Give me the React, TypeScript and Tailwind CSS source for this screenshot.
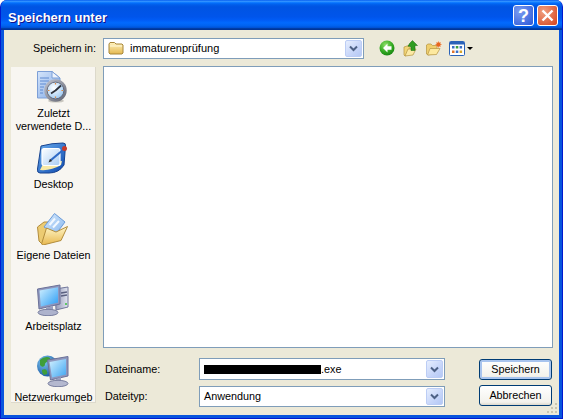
import type { ReactNode } from 'react'

const FONT = "font-['Liberation_Sans',Arial,sans-serif] text-[10.8px] leading-[13px] text-black"

function ComboArrow() {
  return (
    <div className="flex w-[17px] shrink-0 items-center justify-center rounded-[2px] border border-[#bccdf5] bg-[linear-gradient(135deg,#e6eefe,#c6d5f9_60%,#b4c8f5)]">
      <svg width="9" height="7" viewBox="0 0 9 7">
        <path d="M1 1.5 L4.5 5 L8 1.5" fill="none" stroke="#4d6185" strokeWidth="2" />
      </svg>
    </div>
  )
}

function Combo({ className, children }: { className: string; children: ReactNode }) {
  return (
    <div className={`flex items-stretch border border-[#7f9db9] bg-white p-px ${className}`}>
      <div className="flex min-w-0 flex-1 items-center pl-[3px]">{children}</div>
      <ComboArrow />
    </div>
  )
}

function FolderSmall() {
  return (
    <svg width="16" height="14" viewBox="0 0 16 14">
      <defs>
        <linearGradient id="fs" x1="0" y1="0" x2="0" y2="1">
          <stop offset="0" stopColor="#fff3c0" />
          <stop offset="1" stopColor="#e4b850" />
        </linearGradient>
      </defs>
      <path d="M1 3 L2 1.5 H6.5 L8 3 H14 L15 4 V12 L14 13 H2 L1 12 Z" fill="url(#fs)" stroke="#a8873a" strokeWidth="1" />
      <path d="M2 5 H14" stroke="#fff8d8" strokeWidth="1" />
    </svg>
  )
}

function BackIcon() {
  return (
    <svg width="16" height="16" viewBox="0 0 16 16">
      <defs>
        <radialGradient id="bk" cx="0.4" cy="0.3" r="0.8">
          <stop offset="0" stopColor="#8fe06a" />
          <stop offset="0.6" stopColor="#2fa51e" />
          <stop offset="1" stopColor="#137a10" />
        </radialGradient>
      </defs>
      <circle cx="8" cy="8" r="7.5" fill="url(#bk)" />
      <path d="M8.5 3.5 L4 8 L8.5 12.5 V9.7 H12.5 V6.3 H8.5 Z" fill="#fff" />
    </svg>
  )
}

function UpIcon() {
  return (
    <svg width="15" height="17" viewBox="0 0 15 17">
      <path d="M1 7 L7 5 V13 L2 16 L1 15 Z" fill="#f1d476" stroke="#b4933f" strokeWidth="0.7" />
      <path d="M2 16 L5 9 H13 L10 15 Z" fill="#fbe9a5" stroke="#b4933f" strokeWidth="0.7" />
      <path d="M9.5 0.5 L14.5 5.5 H12 V10.5 H8 V7 C7 6 6 6 5 6.5 L6.5 3.5 Z" fill="#2f9c22" stroke="#17690f" strokeWidth="0.5" />
    </svg>
  )
}

function NewFolderIcon() {
  return (
    <svg width="16" height="15" viewBox="0 0 16 15">
      <path d="M0.5 4 L2 3 H5 L6.5 4.5 H11 V12 L2.5 14 L0.5 13 Z" fill="#f0cf6e" stroke="#b4933f" strokeWidth="0.7" />
      <path d="M1.5 14 L4 7.5 H14 L10.5 13.5 Z" fill="#fde99f" stroke="#b4933f" strokeWidth="0.7" />
      <path d="M12.5 0 V7 M9 3.5 H16 M10 1 L15 6 M15 1 L10 6" stroke="#f4a46c" strokeWidth="0.7" />
      <circle cx="12.5" cy="3.5" r="2.2" fill="#e8641e" />
    </svg>
  )
}

function ViewsIcon() {
  return (
    <svg width="16" height="15" viewBox="0 0 16 15">
      <rect x="0.5" y="0.5" width="15" height="14" rx="1" fill="#fff" stroke="#2b63b8" />
      <rect x="1" y="1" width="14" height="2.5" fill="#2b63b8" />
      <rect x="3" y="5" width="2.5" height="2.5" fill="#3a6fc4" />
      <rect x="6.8" y="5" width="2.5" height="2.5" fill="#3aa040" />
      <rect x="10.6" y="5" width="2.5" height="2.5" fill="#3a6fc4" />
      <rect x="3" y="9.5" width="2.5" height="2.5" fill="#e0742c" />
      <rect x="6.8" y="9.5" width="2.5" height="2.5" fill="#3a6fc4" />
      <rect x="10.6" y="9.5" width="2.5" height="2.5" fill="#d9a52a" />
    </svg>
  )
}

function RecentIcon() {
  return (
    <svg width="32" height="32" viewBox="0 0 32 32">
      <defs>
        <linearGradient id="rd" x1="0" y1="0" x2="1" y2="1">
          <stop offset="0" stopColor="#d5e5fb" />
          <stop offset="1" stopColor="#7fa8e6" />
        </linearGradient>
        <linearGradient id="rr" x1="0" y1="0" x2="1" y2="1">
          <stop offset="0" stopColor="#c4c7d2" />
          <stop offset="1" stopColor="#5e616e" />
        </linearGradient>
        <radialGradient id="rc" cx="0.4" cy="0.35" r="0.7">
          <stop offset="0" stopColor="#ffffff" />
          <stop offset="1" stopColor="#9cc9f2" />
        </radialGradient>
      </defs>
      <path d="M0.5 0.5 H15 L23 7 V27 H0.5 Z" fill="url(#rd)" stroke="#7d9fd6" />
      <path d="M15 0.5 V7 H23 Z" fill="#eef4fd" stroke="#7d9fd6" />
      <path d="M3 7 H12 M3 10 H12 M3 13 H9 M3 16 H7 M3 19 H6 M3 22 H6" stroke="#5f8ad0" strokeWidth="1" />
      <ellipse cx="19" cy="30" rx="8" ry="1.6" fill="#c9c7bf" />
      <circle cx="18.5" cy="19.5" r="11.2" fill="url(#rr)" />
      <circle cx="18.5" cy="19.5" r="8.4" fill="url(#rc)" stroke="#55586a" strokeWidth="0.8" />
      <path d="M18.5 19.5 L24 14.5 M18.5 19.5 L14 22.5" stroke="#2d3039" strokeWidth="1.8" />
      <path d="M18.5 12 V13.5 M18.5 25.5 V27 M11 19.5 H12.5 M24.5 19.5 H26" stroke="#e2873a" strokeWidth="1.2" />
    </svg>
  )
}

function DesktopIcon() {
  return (
    <svg width="32" height="32" viewBox="0 0 32 32">
      <defs>
        <linearGradient id="dk" x1="0" y1="0" x2="1" y2="1">
          <stop offset="0" stopColor="#6db0f0" />
          <stop offset="1" stopColor="#0b46ad" />
        </linearGradient>
        <linearGradient id="dp" x1="0" y1="0" x2="1" y2="1">
          <stop offset="0" stopColor="#fdfeff" />
          <stop offset="1" stopColor="#a9cdf5" />
        </linearGradient>
      </defs>
      <path d="M4 4 Q15 1 26 1 Q29 1 28.5 4 L27 23 Q22 31 12 31 H3 Q0 31 0.5 27 Z" fill="url(#dk)" stroke="#17428e" />
      <path d="M3 28 Q14 29 24 23 L25 19 L6 22 Z" fill="#f8e9a5" />
      <rect x="5" y="6.5" width="18" height="17" rx="2" fill="url(#dp)" stroke="#ffffff" strokeWidth="1.2" />
      <path d="M14 18 L26 8" stroke="#2f6ac6" strokeWidth="2.2" />
      <path d="M11.5 20.5 L13 16.8 L15.2 19 Z" fill="#2b2b2b" />
      <circle cx="27.5" cy="6.5" r="2.5" fill="#c63a2b" />
    </svg>
  )
}

function MyDocsIcon() {
  return (
    <svg width="32" height="32" viewBox="0 0 32 32">
      <defs>
        <linearGradient id="md" x1="0" y1="0" x2="0" y2="1">
          <stop offset="0" stopColor="#fff6c8" />
          <stop offset="1" stopColor="#e8b84e" />
        </linearGradient>
        <linearGradient id="mb" x1="0" y1="0" x2="1" y2="1">
          <stop offset="0" stopColor="#d5e8fc" />
          <stop offset="1" stopColor="#8ab9ef" />
        </linearGradient>
      </defs>
      <path d="M0.5 14 L7 9 H12 V28 L5 31 L2 28 Z" fill="#eccb72" stroke="#b28c3c" />
      <path d="M7 14 L17.5 0.5 L28 9 L19 21 Z" fill="url(#mb)" stroke="#6a9ad8" />
      <path d="M12.5 12 L18 5.5 M16 14.5 L22 8" stroke="#f2f8ff" strokeWidth="2" />
      <path d="M4.5 31 L9.5 15 L19 19 L30.5 13.5 L24 27.5 L6 32 Z" fill="url(#md)" stroke="#b28c3c" />
    </svg>
  )
}

function MyComputerIcon() {
  return (
    <svg width="32" height="32" viewBox="0 0 32 32">
      <defs>
        <linearGradient id="mc" x1="0" y1="0" x2="1" y2="1">
          <stop offset="0" stopColor="#d2f0ff" />
          <stop offset="1" stopColor="#2a9cf4" />
        </linearGradient>
        <linearGradient id="mt" x1="0" y1="0" x2="1" y2="0">
          <stop offset="0" stopColor="#8f94b3" />
          <stop offset="1" stopColor="#e2e5f1" />
        </linearGradient>
      </defs>
      <path d="M18 5 L31 3 V23 L19 26 Z" fill="url(#mt)" stroke="#71779a" />
      <path d="M24 9 L30 8 M24 12 L30 11" stroke="#5a6080" strokeWidth="1.4" />
      <circle cx="29" cy="20" r="1" fill="#38c03a" />
      <path d="M0.5 5 L23 1 V20 L2 25 Z" fill="#8e96bd" stroke="#6b7198" />
      <path d="M2.5 6.5 L21 3.2 V18.5 L3.8 22.5 Z" fill="url(#mc)" />
      <path d="M9 23.5 L16 22 V27 L9 28 Z" fill="#9aa0bf" />
      <ellipse cx="11" cy="28.5" rx="10" ry="3.2" fill="#aeb3cd" stroke="#787e9f" />
    </svg>
  )
}

function NetworkIcon() {
  return (
    <svg width="32" height="32" viewBox="0 0 32 32">
      <defs>
        <radialGradient id="ng" cx="0.35" cy="0.3" r="0.8">
          <stop offset="0" stopColor="#7fc8f2" />
          <stop offset="1" stopColor="#104f9e" />
        </radialGradient>
        <linearGradient id="nm" x1="0" y1="0" x2="1" y2="1">
          <stop offset="0" stopColor="#d2f0ff" />
          <stop offset="1" stopColor="#3fa6f2" />
        </linearGradient>
      </defs>
      <circle cx="10.5" cy="11" r="10.5" fill="url(#ng)" />
      <path d="M3 5 C6 2 11 1 13 3 C14 6 9 6 8 9 C8 12 5 13 3 10 Z" fill="#3f9e3a" />
      <path d="M5 15 C8 13 11 15 10 19 L7 20 C5 18 5 17 5 15 Z" fill="#3f9e3a" />
      <path d="M10.5 5 L31 1.5 V21 L13.5 25 Z" fill="#8e96bd" stroke="#6b7198" />
      <path d="M12.5 7 L29 4 V19.5 L15 22.5 Z" fill="url(#nm)" />
      <path d="M19 24 L24 22 V27 L19 28 Z" fill="#9aa0bf" />
      <ellipse cx="21" cy="28.5" rx="10" ry="3.2" fill="#b4b8cf" stroke="#787e9f" />
    </svg>
  )
}

function PlacesItem({ icon, h, children }: { icon: ReactNode; h: string; children: ReactNode }) {
  return (
    <div className={`flex flex-col items-center pt-[4px] text-center ${h}`}>
      <div className="-translate-x-px">{icon}</div>
      <div className="mt-[4px] w-full whitespace-nowrap">{children}</div>
    </div>
  )
}

function XpButton({ isDefault, children }: { isDefault?: boolean; children: ReactNode }) {
  return (
    <div
      className={`flex h-[21px] items-center justify-center rounded-[3px] border border-[#003c74] bg-[linear-gradient(180deg,#ffffff,#f3f2ec_85%,#dcd8cc)] ${isDefault ? 'shadow-[inset_0_0_0_2px_#a8c4ee]' : ''}`}
    >
      {children}
    </div>
  )
}

const GRIP = [
  [8, 0],
  [4, 4],
  [8, 4],
  [0, 8],
  [4, 8],
  [8, 8],
]

export default function App() {
  return (
    <div className={`relative flex h-[419px] w-[563px] flex-col overflow-hidden rounded-t-[7px] border-x border-b border-[#0019cf] bg-[#0855dd] ${FONT}`}>
      <div className="-mx-px flex h-[30px] shrink-0 items-start bg-[linear-gradient(180deg,#0058ee_0%,#3593ff_4%,#288eff_6%,#127dff_8%,#036ffc_10%,#0262ee_14%,#0057e5_20%,#0054e3_24%,#0055eb_56%,#005bf5_66%,#026afe_76%,#0062ef_86%,#0052d6_92%,#0040ab_94%,#003092_100%)] pl-[8px] pr-[5px]">
        <span className="mt-[10px] flex-1 font-['Liberation_Sans',sans-serif] text-[13px] font-bold leading-[15px] text-white [text-shadow:1px_1px_#0f1089]">
          Speichern unter
        </span>
        <div className="mt-[5px] flex gap-[3px]">
          <div className="flex h-[21px] w-[21px] items-center justify-center rounded-[3px] border border-white bg-[radial-gradient(circle_at_30%_30%,#7a9cf0,#2c58d8)] font-['Liberation_Sans',sans-serif] text-[18px] font-bold leading-none text-white">
            ?
          </div>
          <div className="flex h-[21px] w-[21px] items-center justify-center rounded-[3px] border border-white bg-[radial-gradient(circle_at_30%_30%,#f0a080,#d5421c)]">
            <svg width="13" height="13" viewBox="0 0 13 13">
              <path d="M1.5 1.5 L11.5 11.5 M11.5 1.5 L1.5 11.5" stroke="#fff" strokeWidth="2.4" />
            </svg>
          </div>
        </div>
      </div>

      <div className="mx-[3px] flex min-h-0 flex-1 flex-col bg-[#ece9d8]">
        <div className="flex h-[36px] shrink-0 items-center">
          <div className="w-[92px] text-right">Speichern in:</div>
          <Combo className="ml-[7px] h-[21px] w-[261px]">
            <FolderSmall />
            <span className="ml-[6px] text-[11px]">immaturenprüfung</span>
          </Combo>
          <div className="ml-[15px] flex items-center">
            <BackIcon />
            <div className="ml-[8px]"><UpIcon /></div>
            <div className="ml-[8px]"><NewFolderIcon /></div>
            <div className="ml-[7px]"><ViewsIcon /></div>
            <div className="ml-[2px] h-0 w-0 border-x-[3px] border-t-[3px] border-x-transparent border-t-black" />
          </div>
        </div>

        <div className="flex">
          <div className="ml-[7px] mt-px flex h-[336px] w-[85px] flex-col bg-[#f8f6f1] shadow-[inset_-1px_-1px_#dcd9cb]">
            <PlacesItem icon={<RecentIcon />} h="h-[71px]">
              <div>Zuletzt</div>
              <div>verwendete D...</div>
            </PlacesItem>
            <PlacesItem icon={<DesktopIcon />} h="h-[71px]">Desktop</PlacesItem>
            <PlacesItem icon={<MyDocsIcon />} h="h-[71px]">Eigene Dateien</PlacesItem>
            <PlacesItem icon={<MyComputerIcon />} h="h-[71px]">Arbeitsplatz</PlacesItem>
            <PlacesItem icon={<NetworkIcon />} h="h-[52px]">Netzwerkumgeb</PlacesItem>
          </div>

          <div className="ml-[7px] flex w-[450px] flex-col">
            <div className="h-[282px] border border-[#7f9db9] bg-white" />
            <div className="mt-[10px] flex">
              <div className="flex flex-col gap-[6px]">
                <div className="flex items-center">
                  <div className="w-[96px] pl-[2px]">Dateiname:</div>
                  <Combo className="h-[22px] w-[246px]">
                    <span className="inline-block h-[9px] w-[117px] bg-black" />
                    <span>.exe</span>
                  </Combo>
                </div>
                <div className="flex items-center">
                  <div className="w-[96px] pl-[2px]">Dateityp:</div>
                  <Combo className="h-[21px] w-[246px]">
                    <span>Anwendung</span>
                  </Combo>
                </div>
              </div>
              <div className="ml-[34px] flex w-[73px] flex-col gap-[5px] pt-px">
                <XpButton isDefault>Speichern</XpButton>
                <XpButton>Abbrechen</XpButton>
              </div>
            </div>
          </div>
        </div>
      </div>
      <div className="h-[3px] shrink-0" />

      <div className="absolute left-[546px] top-[403px] h-[10px] w-[10px]">
        {GRIP.map(([x, y]) => (
          <div
            key={`${x}-${y}`}
            className="absolute h-[2px] w-[2px] bg-[#c9c5b0]"
            style={{ left: x, top: y }}
          />
        ))}
      </div>
    </div>
  )
}
